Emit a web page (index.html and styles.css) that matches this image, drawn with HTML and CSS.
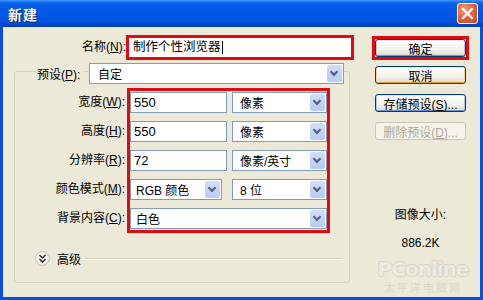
FILE: index.html
```html
<!DOCTYPE html>
<html>
<head>
    <link rel="stylesheet" href="styles.css">
</head>
<body>
    <div class="window">
        <div class="titlebar">
            <span class="title">新建</span>
            <span class="close-btn">
                <svg width="13" height="13" viewBox="0 0 13 13"><path d="M2 2 L11 11 M11 2 L2 11" stroke="#fff" stroke-width="2.2" stroke-linecap="square"/></svg>
            </span>
        </div>

        <div class="client">
            <div class="main">
                <div class="name-row">
                    <label class="name-label">名称(<u>N</u>):</label>
                    <div class="name-input mark">制作个性浏览器<span class="caret"></span></div>
                </div>

                <div class="group">
                    <div class="legend">
                        <label class="legend-label">预设(<u>P</u>):</label>
                        <div class="select preset">自定<span class="arrow"></span></div>
                    </div>

                    <div class="fields">
                        <div class="labels">
                            <label>宽度(<u>W</u>):</label>
                            <label>高度(<u>H</u>):</label>
                            <label>分辨率(<u>R</u>):</label>
                            <label>颜色模式(<u>M</u>):</label>
                            <label>背景内容(<u>C</u>):</label>
                        </div>
                        <div class="controls mark">
                            <div class="row">
                                <div class="input num">550</div>
                                <div class="select unit">像素<span class="arrow"></span></div>
                            </div>
                            <div class="row">
                                <div class="input num">550</div>
                                <div class="select unit">像素<span class="arrow"></span></div>
                            </div>
                            <div class="row">
                                <div class="input num">72</div>
                                <div class="select unit">像素/英寸<span class="arrow"></span></div>
                            </div>
                            <div class="row">
                                <div class="select mode">RGB 颜色<span class="arrow"></span></div>
                                <div class="select unit">8 位<span class="arrow"></span></div>
                            </div>
                            <div class="row">
                                <div class="select full">白色<span class="arrow"></span></div>
                            </div>
                        </div>
                    </div>

                    <div class="advanced">
                        <span class="chevron">
                            <svg width="9" height="9" viewBox="0 0 9 9"><path d="M1.5 1 L4.5 4 L7.5 1 M1.5 5 L4.5 8 L7.5 5" fill="none" stroke="#222" stroke-width="1.4"/></svg>
                        </span>
                        <span class="adv-text">高级</span>
                        <span class="groove"></span>
                    </div>
                </div>
            </div>

            <div class="side">
                <div class="ok-mark">
                    <button class="btn default">确定</button>
                </div>
                <button class="btn hot side-btn">取消</button>
                <button class="btn default side-btn">存储预设(<u>S</u>)...</button>
                <button class="btn disabled side-btn">删除预设(<u>D</u>)...</button>

                <div class="size-info">
                    <div>图像大小:</div>
                    <div class="size-value">886.2K</div>
                </div>
            </div>

            <div class="watermark">
                <div class="wm-logo">PConline</div>
                <div class="wm-sub">太平洋电脑网</div>
            </div>
        </div>
    </div>
</body>
</html>
```

FILE: styles.css
```css
body {
    margin: 0;
    font-family: "Liberation Sans", "Noto Sans CJK SC", sans-serif;
    font-size: 12px;
    color: #000;
    background: #fff;
}

u {
    text-decoration: underline;
    text-underline-offset: 1px;
}

.window {
    width: 483px;
    height: 300px;
    display: flex;
    flex-direction: column;
    background: #0a4fd8;
}

.titlebar {
    height: 27px;
    flex: none;
    display: flex;
    align-items: center;
    justify-content: space-between;
    padding: 0 5px 0 8px;
    box-sizing: border-box;
    background: linear-gradient(#3d95ff 0, #0a62ea 3px, #0658e6 7px, #0357e8 14px, #0552dd 21px, #0043c8 26px, #0a3cb0 27px);
}

.title {
    color: #fff;
    font-size: 14px;
    font-weight: bold;
    letter-spacing: 1px;
    text-shadow: 1px 1px 0 #0a1e6a;
}

.close-btn {
    width: 21px;
    height: 21px;
    box-sizing: border-box;
    border: 1px solid #fff;
    border-radius: 3px;
    display: flex;
    align-items: center;
    justify-content: center;
    background: radial-gradient(circle at 35% 30%, #f3a58a 0, #e4643c 45%, #cc4418 100%);
}

.client {
    flex: 1;
    margin: 0 3px 3px 3px;
    background: #ece9d8;
    display: flex;
    padding-top: 8px;
    position: relative;
}

.main {
    width: 341px;
    margin-left: 11px;
}

.name-row {
    display: flex;
    height: 25px;
}

.name-label {
    width: 112px;
    text-align: right;
    line-height: 25px;
}

.mark {
    border: 3px solid #e00a12;
}

.name-input {
    width: 228px;
    height: 25px;
    box-sizing: border-box;
    background: #fff;
    padding-left: 4px;
    line-height: 19px;
    font-size: 12.5px;
    display: flex;
    align-items: center;
}

.caret {
    width: 1px;
    height: 13px;
    background: #000;
    margin-left: 1px;
}

.group {
    width: 336px;
    height: 212px;
    box-sizing: border-box;
    margin-top: 11px;
    border: 1px solid #d0d0bf;
    border-radius: 3px;
}

.legend {
    display: flex;
    align-items: center;
    margin-top: -9px;
    height: 21px;
    padding-left: 21px;
}

.legend-label {
    background: #ece9d8;
    padding: 0 1px;
    width: 46px;
}

.select,
.input {
    height: 21px;
    box-sizing: border-box;
    border: 1px solid #7f9db9;
    background: #fff;
    display: flex;
    align-items: center;
    padding-left: 4px;
    position: relative;
}

.select .arrow {
    position: absolute;
    right: 1px;
    top: 1px;
    width: 15px;
    height: 17px;
    border-radius: 2px;
    background: linear-gradient(#d2def9, #b6caf5);
    border: 0 solid #b9cbf3;
}

.select .arrow::after {
    content: "";
    position: absolute;
    left: 4px;
    top: 4px;
    width: 4px;
    height: 4px;
    border-right: 2px solid #4d6185;
    border-bottom: 2px solid #4d6185;
    transform: rotate(45deg);
}

.preset {
    width: 255px;
    margin-left: 5px;
    padding-left: 8px;
}

.fields {
    display: flex;
    margin-top: 4px;
}

.labels {
    width: 112px;
    padding-top: 4px;
    display: flex;
    flex-direction: column;
    gap: 8px;
}

.labels label {
    height: 21px;
    line-height: 21px;
    text-align: right;
    padding-right: 2px;
}

.controls {
    width: 197px;
    padding: 1px 0;
    display: flex;
    flex-direction: column;
    gap: 8px;
}

.row {
    display: flex;
    justify-content: space-between;
}

.num {
    width: 97px;
    padding-left: 3px;
    font-size: 13px;
}

.unit {
    width: 95px;
    padding-left: 7px;
}

.mode {
    width: 92px;
    padding-left: 5px;
}

.full {
    width: 197px;
    padding-left: 5px;
}

.advanced {
    display: flex;
    align-items: center;
    margin-top: 18px;
    padding-left: 20px;
    height: 15px;
}

.chevron {
    width: 15px;
    height: 15px;
    box-sizing: border-box;
    border-radius: 50%;
    border: 1px solid #c8c5b5;
    background: radial-gradient(circle at 40% 35%, #fff 0, #f1efe6 55%, #d6d2c2 100%);
    display: flex;
    align-items: center;
    justify-content: center;
}

.adv-text {
    margin-left: 7px;
}

.groove {
    flex: 1;
    height: 0;
    border-top: 1px solid #d0d0bf;
    border-bottom: 1px solid #fff;
    margin: 0 6px 0 4px;
}

.side {
    width: 97px;
    margin-left: 17px;
    margin-top: 1px;
    display: flex;
    flex-direction: column;
}

.ok-mark {
    border: 3px solid #e00a12;
    height: 24px;
    box-sizing: border-box;
}

.btn {
    width: 91px;
    height: 18px;
    padding: 0;
    font-family: inherit;
    font-size: 12px;
    color: #000;
    border: 1px solid #003c74;
    border-radius: 3px;
    background: linear-gradient(#ffffff, #f3f2ec 60%, #e3dfd4 90%, #d6d0c5);
}

.ok-mark .btn {
    display: block;
    height: 18px;
}

.side-btn {
    margin-left: 3px;
    margin-top: 10px;
}

.hot {
    margin-top: 6px;
    box-shadow: inset 0 1px 0 #ffeac0, inset 1px 0 0 #fbd58b, inset -1px 0 0 #fbd58b, inset 0 -1px 0 #e5a01a;
}

.default {
    box-shadow: inset 0 1px 0 #cee7ff, inset 1px 0 0 #a6c8f4, inset -1px 0 0 #a6c8f4, inset 0 -1px 0 #6a8fd8;
}

.disabled {
    color: #aca899;
    border-color: #c9c7ba;
    background: #f5f4ea;
}

.disabled u {
    text-decoration-color: #aca899;
}

.size-info {
    margin-top: 67px;
    text-align: center;
    line-height: 16px;
    margin-left: 3px;
    width: 91px;
}

.size-value {
    margin-top: 12px;
}

.watermark {
    position: absolute;
    left: 370px;
    top: 230px;
    width: 100px;
    text-align: center;
    color: #e2e0d3;
    pointer-events: none;
}

.wm-logo {
    font-family: "DejaVu Sans", sans-serif;
    font-size: 20px;
    font-weight: bold;
    letter-spacing: -1px;
    color: #ecebe2;
    text-shadow: 1px 0 0 #d6d3c4, -1px 0 0 #d6d3c4, 0 1px 0 #d6d3c4, 0 -1px 0 #d6d3c4;
}

.wm-sub {
    font-size: 11px;
    letter-spacing: 2px;
    color: #dad7ca;
    margin-top: -2px;
}
```
